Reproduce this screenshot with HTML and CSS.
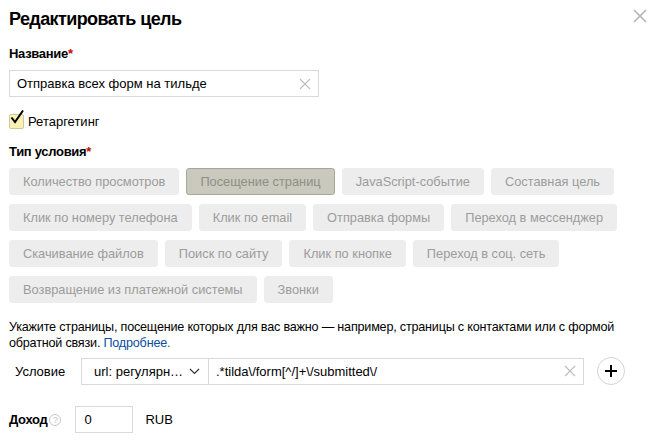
FILE: index.html
```html
<!DOCTYPE html>
<html lang="ru">

<head>
    <meta charset="UTF-8">
    <meta name="viewport" content="width=device-width, initial-scale=1.0">
    <title>Редактировать цель</title>
    <link rel="stylesheet" href="styles.css">
</head>

<body>
    <div class="dialog">
        <!-- заголовок -->
        <div class="dialog-head">
            <h1 class="dialog-title">Редактировать цель</h1>
            <span class="dialog-close">
                <svg width="14" height="14" viewBox="0 0 14 14"><path d="M1 1L13 13M13 1L1 13" stroke="#b5b5b5" stroke-width="1.6" fill="none"/></svg>
            </span>
        </div>

        <!-- название -->
        <div class="field-label">Название<span class="req">*</span></div>
        <div class="text-input name-input">
            <span class="text-input-value">Отправка всех форм на тильде</span>
            <span class="text-input-clear">
                <svg width="12" height="12" viewBox="0 0 12 12"><path d="M1 1L11 11M11 1L1 11" stroke="#bdbdbd" stroke-width="1.1" fill="none"/></svg>
            </span>
        </div>

        <label class="checkbox">
            <span class="checkbox-box">
                <svg width="18" height="18" viewBox="0 0 18 18"><path d="M3.5 8.5L7 13L15 1.5" stroke="#000" stroke-width="2" fill="none"/></svg>
            </span>
            <span class="checkbox-text">Ретаргетинг</span>
        </label>

        <!-- тип условия -->
        <div class="field-label type-label">Тип условия<span class="req">*</span></div>
        <div class="type-list">
            <span class="type-item">Количество просмотров</span>
            <span class="type-item selected">Посещение страниц</span>
            <span class="type-item">JavaScript-событие</span>
            <span class="type-item">Составная цель</span>
            <span class="type-item">Клик по номеру телефона</span>
            <span class="type-item">Клик по email</span>
            <span class="type-item">Отправка формы</span>
            <span class="type-item">Переход в мессенджер</span>
            <span class="type-item">Скачивание файлов</span>
            <span class="type-item">Поиск по сайту</span>
            <span class="type-item">Клик по кнопке</span>
            <span class="type-item">Переход в соц. сеть</span>
            <span class="type-item">Возвращение из платежной системы</span>
            <span class="type-item">Звонки</span>
        </div>

        <p class="hint">Укажите страницы, посещение которых для вас важно — например, страницы с контактами или с формой обратной связи. <a href="#" class="link">Подробнее.</a></p>

        <!-- условие -->
        <div class="condition">
            <span class="condition-label">Условие</span>
            <span class="select">
                <span class="select-value">url: регулярн…</span>
                <svg width="11" height="7" viewBox="0 0 11 7"><path d="M1 1L5.5 5.5L10 1" stroke="#333" stroke-width="1.2" fill="none"/></svg>
            </span>
            <div class="text-input cond-input">
                <span class="text-input-value">.*tilda\/form[^/]+\/submitted\/</span>
                <span class="text-input-clear">
                    <svg width="12" height="12" viewBox="0 0 12 12"><path d="M1 1L11 11M11 1L1 11" stroke="#bdbdbd" stroke-width="1.1" fill="none"/></svg>
                </span>
            </div>
            <span class="add-btn">
                <svg width="14" height="14" viewBox="0 0 14 14"><path d="M7 1V13M1 7H13" stroke="#000" stroke-width="2" fill="none"/></svg>
            </span>
        </div>

        <!-- доход -->
        <div class="income">
            <span class="income-label">Доход</span>
            <span class="help">?</span>
            <div class="text-input income-input">
                <span class="text-input-value">0</span>
            </div>
            <span class="currency">RUB</span>
        </div>
    </div>
</body>

</html>
```

FILE: styles.css
```css
/* общие стили */

*,
 ::after,
 ::before {
    margin: 0;
    padding: 0;
    box-sizing: border-box;
}

body {
    background-color: #fff;
    color: #000;
    font-family: "Liberation Sans", Arial, sans-serif;
    font-size: 13px;
}

.dialog {
    width: 654px;
    padding: 6px 9px 0 9px;
}

/* заголовок */

.dialog-head {
    display: flex;
    justify-content: space-between;
    align-items: flex-start;
}

.dialog-title {
    font-size: 18px;
    line-height: 26px;
    font-weight: bold;
    letter-spacing: -0.6px;
}

.dialog-close {
    display: flex;
    margin-top: 3px;
    margin-right: -2px;
}

/* поля */

.field-label {
    margin-top: 14px;
    font-weight: bold;
    font-size: 13px;
    line-height: 16px;
    letter-spacing: -0.3px;
}

.req {
    color: #c00;
}

.text-input {
    display: flex;
    align-items: center;
    height: 27px;
    border: 1px solid #d9d9d9;
    padding: 0 7px;
    background-color: #fff;
}

.text-input-value {
    flex: 1;
    white-space: nowrap;
    overflow: hidden;
}

.text-input-clear {
    display: flex;
}

.name-input {
    width: 310px;
    margin-top: 8px;
}

.checkbox {
    display: flex;
    align-items: center;
    margin-top: 16px;
    height: 16px;
}

.checkbox-box {
    position: relative;
    width: 15px;
    height: 15px;
    border: 1px solid #cfc99a;
    border-radius: 2px;
    background-color: #fbf1b3;
    margin-right: 4px;
}

.checkbox-box svg {
    position: absolute;
    left: -2px;
    top: -6px;
}

/* тип условия */

.type-label {
    margin-top: 15px;
}

.type-list {
    display: flex;
    flex-wrap: wrap;
    gap: 9px 7px;
    width: 620px;
    margin-top: 8px;
}

.type-item {
    display: flex;
    align-items: center;
    height: 27px;
    padding: 0 13px;
    border: 1px solid #ededed;
    border-radius: 3px;
    background-color: #ededed;
    color: #9c9c9c;
    font-size: 12.8px;
    white-space: nowrap;
}

.type-item.selected {
    background-color: #c9c9bd;
    border-color: #a8a898;
    color: #8f8f86;
}

.hint {
    margin-top: 16px;
    line-height: 16px;
    font-size: 12.6px;
    letter-spacing: -0.2px;
    color: #000;
}

.link {
    color: #0a4ea0;
    text-decoration: none;
}

/* условие */

.condition {
    display: flex;
    align-items: center;
    margin-top: 6px;
}

.condition-label {
    width: 72px;
    padding-left: 6px;
}

.select {
    display: flex;
    align-items: center;
    justify-content: space-between;
    width: 127px;
    height: 27px;
    border: 1px solid #d9d9d9;
    border-right: none;
    padding: 0 8px 0 12px;
}

.cond-input {
    width: 376px;
}

.add-btn {
    display: flex;
    align-items: center;
    justify-content: center;
    width: 28px;
    height: 28px;
    margin-left: 13px;
    border: 1px solid #d3d3d3;
    border-radius: 50%;
}

/* доход */

.income {
    display: flex;
    align-items: center;
    margin-top: 21px;
}

.income-label {
    font-weight: bold;
    font-size: 13px;
    letter-spacing: -0.3px;
}

.help {
    display: flex;
    align-items: center;
    justify-content: center;
    width: 12px;
    height: 12px;
    margin-left: 2px;
    border: 1px solid #c8c8c8;
    border-radius: 50%;
    color: #c0c0c0;
    font-size: 9px;
}

.income-input {
    width: 58px;
    margin-left: 14px;
    padding-left: 8px;
}

.currency {
    margin-left: 12px;
}
```
